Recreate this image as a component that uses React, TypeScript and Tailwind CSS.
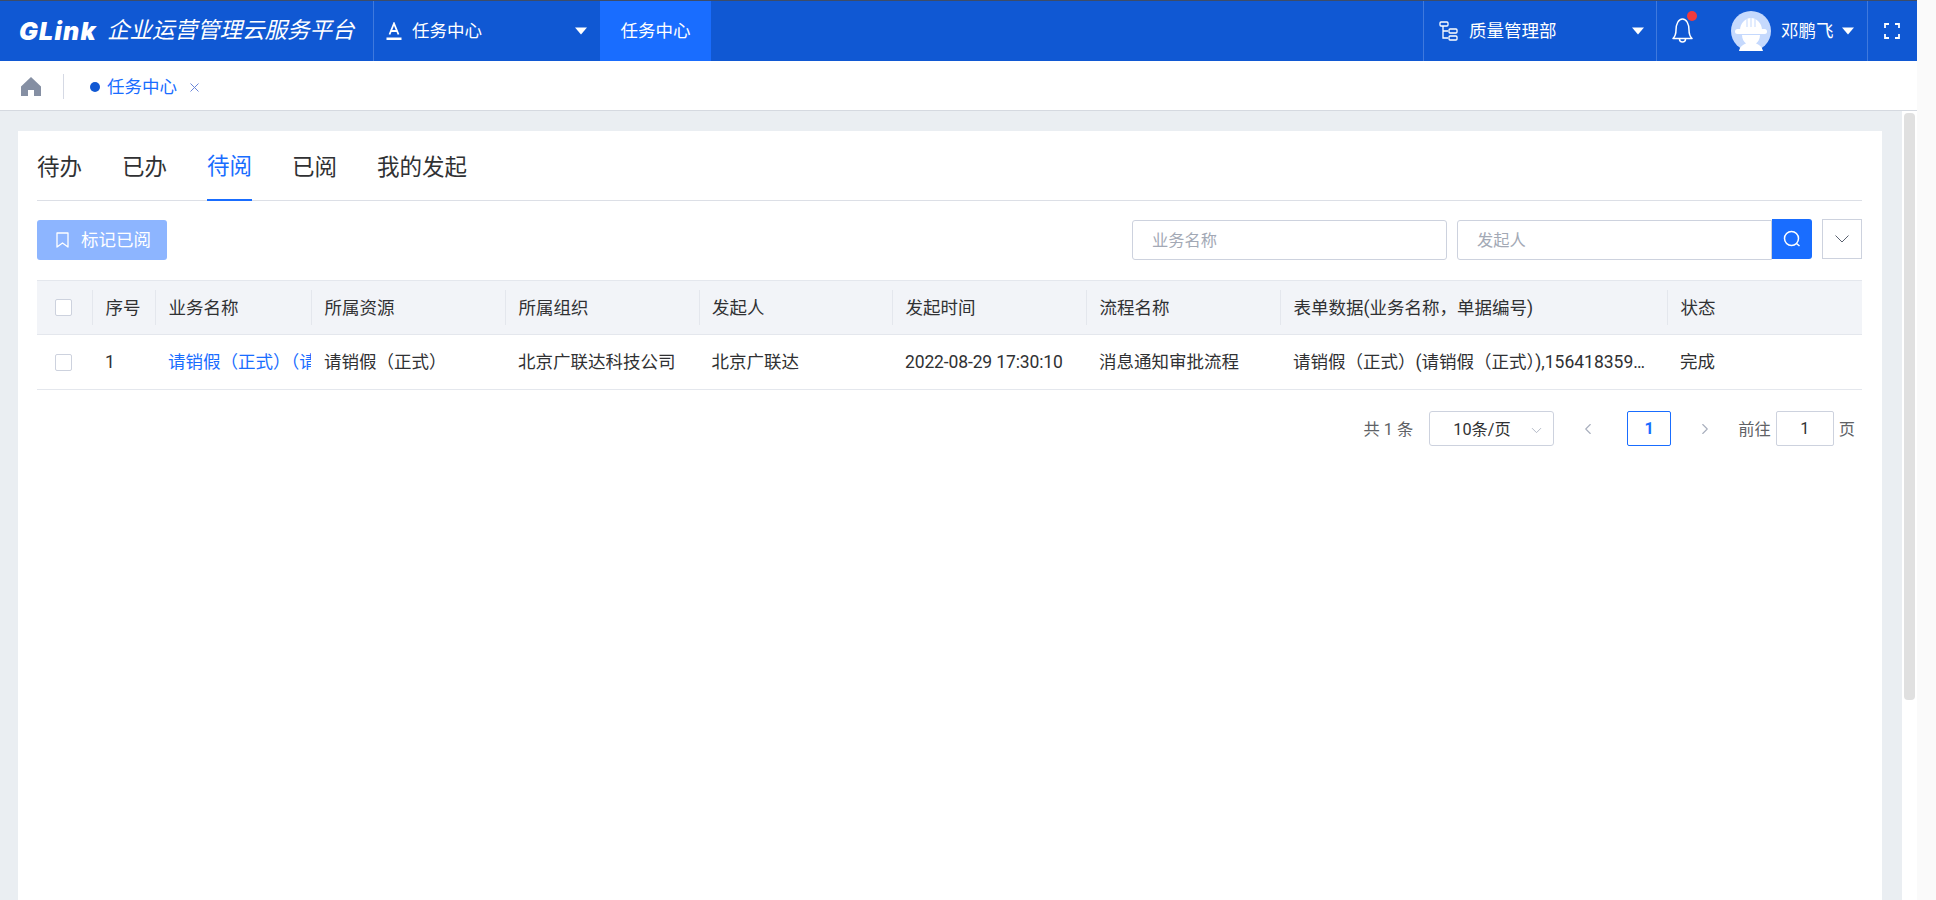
import { ChevronDown, ChevronLeft, ChevronRight } from 'lucide-react';

const columns = ['序号', '业务名称', '所属资源', '所属组织', '发起人', '发起时间', '流程名称', '表单数据(业务名称，单据编号)', '状态'];
const tabs = ['待办', '已办', '待阅', '已阅', '我的发起'];

function Caret({ className = '' }: { className?: string }) {
  return (
    <svg width="12" height="8" viewBox="0 0 12 8" className={className}>
      <path d="M0 0.5h12L6 7.5z" fill="#fff" />
    </svg>
  );
}

function Avatar() {
  return (
    <svg width="40" height="40" viewBox="0 0 40 40" className="shrink-0">
      <circle cx="20" cy="20" r="20" fill="#c5d9fd" />
      <path d="M9 19c0-6 5-12 11-12s11 6 11 12z" fill="#fff" />
      <path d="M16 8v8M20 7v9M24 8v8" stroke="#c5d9fd" strokeWidth="1" />
      <rect x="4" y="18" width="32" height="5" rx="2.5" fill="#fff" />
      <path d="M11 24h18c0 4-2 7-4 8.500 3 1 6 3 7 7.500H8c1-4.500 4-6.500 7-7.500-2-1.500-4-4.500-4-8.500z" fill="#fff" />
    </svg>
  );
}

function TopBar() {
  return (
    <div className="h-[61px] border-t border-[#3d4c68] bg-[#1058d3] flex text-white text-[17.5px] shrink-0">
      <div className="w-[374px] flex items-center pl-[19px] border-r border-[#3f79dd]">
        <span className="font-['Inter',sans-serif] font-black italic text-[25px] tracking-[1.2px] leading-none w-[88px]">GLink</span>
        <span className="italic text-[22.5px] whitespace-nowrap">企业运营管理云服务平台</span>
      </div>
      <div className="w-[226px] flex items-center pl-[12px]">
        <svg width="16" height="19" viewBox="0 0 16 19" className="shrink-0">
          <path d="M3.500 12.500L8 1.500l4.500 11M5 9h6" fill="none" stroke="#fff" strokeWidth="1.800" />
          <rect x="0.500" y="15.500" width="15" height="2.500" fill="#fff" />
        </svg>
        <span className="ml-[10px]">任务中心</span>
        <Caret className="ml-auto mr-[13px]" />
      </div>
      <div className="w-[111px] bg-[#196dff] flex items-center justify-center">任务中心</div>
      <div className="ml-auto w-[233px] flex items-center border-l border-[#3f79dd] pl-[15px]">
        <svg width="19" height="20" viewBox="0 0 19 20" className="shrink-0" fill="none" stroke="#fff" strokeWidth="1.300">
          <rect x="1" y="1" width="8" height="4" rx="1" />
          <path d="M4 5v12h5M4 10h5" />
          <rect x="10" y="8" width="8" height="4" rx="1" />
          <rect x="10" y="15" width="8" height="4" rx="1" />
        </svg>
        <span className="ml-[11px]">质量管理部</span>
        <Caret className="ml-auto mr-[12px]" />
      </div>
      <div className="w-[211px] flex items-center border-l border-[#3f79dd]">
        <div className="relative ml-[15px] w-[21px] h-[26px]">
          <svg width="21" height="26" viewBox="0 0 21 26" fill="none" stroke="#fff" strokeWidth="1.500">
            <path d="M1 20.500c2-2 3-4 3-8.500 0-6 2.500-11 6.500-11s6.500 5 6.500 11c0 4.500 1 6.500 3 8.500z" strokeLinejoin="round" />
            <path d="M7.500 21c0 4 6 4 6 0" />
          </svg>
          <span className="absolute -top-[7px] -right-[4px] w-[10px] h-[10px] rounded-full bg-[#f23b3b]" />
        </div>
        <div className="ml-[38px]">
          <Avatar />
        </div>
        <span className="ml-[10px] whitespace-nowrap">邓鹏飞</span>
        <Caret className="ml-[8px]" />
      </div>
      <div className="w-[50px] flex items-center justify-center border-l border-[#3f79dd] pr-[2px]">
        <svg width="16" height="16" viewBox="0 0 16 16" fill="none" stroke="#fff" strokeWidth="1.800">
          <path d="M1 5V1h4M11 1h4v4M15 11v4h-4M5 15H1v-4" />
        </svg>
      </div>
    </div>
  );
}

function TagBar() {
  return (
    <div className="h-[50px] bg-white border-b border-[#d5d9e0] flex items-center shrink-0">
      <svg width="20" height="19" viewBox="0 0 20 19" className="ml-[21px] shrink-0 mt-[1px]">
        <path d="M10 0L0 9.500V19h7v-6h6v6h7V9.500z" fill="#858fa3" />
      </svg>
      <div className="ml-[22px] h-[25px] border-l border-[#d5d9e4] mt-[1px]" />
      <span className="ml-[26px] w-[10px] h-[10px] rounded-full bg-[#1058d3] mt-[2px]" />
      <span className="ml-[7px] text-[17.5px] text-[#196dff] mt-[4px]">任务中心</span>
      <svg width="9" height="9" viewBox="0 0 9 9" className="ml-[13px] mt-[3px]" fill="none" stroke="#6b86d8" strokeWidth="1">
        <path d="M0.500 0.500l8 8M8.500 0.500l-8 8" />
      </svg>
    </div>
  );
}

function Checkbox() {
  return <div className="w-[17px] h-[17px] rounded-[2px] border border-[#cdd2de] bg-white" />;
}

function TaskTable() {
  const grid = 'grid grid-cols-[55px_63px_156px_194px_193.5px_193.5px_194px_194px_387px_194.5px]';
  return (
    <div className="mt-[20px] text-[17.5px] text-[#303133]">
      <div className={`${grid} h-[55px] bg-[#f2f4f8] border-y border-[#e4e7ed]`}>
        <div className="flex items-center pl-[18px]">
          <Checkbox />
        </div>
        {columns.map((col) => (
          <div key={col} className="flex items-center">
            <div className="h-[35px] w-full border-l border-[#e4e7ed] pl-[12.500px] pt-[2px] flex items-center whitespace-nowrap">{col}</div>
          </div>
        ))}
      </div>
      <div className={`${grid} h-[55px] border-b border-[#e4e7ed] items-center`}>
        <div className="pl-[18px]">
          <Checkbox />
        </div>
        <div className="pl-[13px]">1</div>
        <div className="pl-[13px] pr-[4px] overflow-hidden whitespace-nowrap text-[#196dff]">请销假（正式）（请销假（正式））</div>
        <div className="pl-[13px]">请销假（正式）</div>
        <div className="pl-[13px]">北京广联达科技公司</div>
        <div className="pl-[13px]">北京广联达</div>
        <div className="pl-[13px] tracking-[-0.13px]">2022-08-29 17:30:10</div>
        <div className="pl-[13px]">消息通知审批流程</div>
        <div className="pl-[13px] pr-[15px] truncate">请销假（正式）(请销假（正式）),1564183591234567</div>
        <div className="pl-[13px]">完成</div>
      </div>
    </div>
  );
}

function Pager() {
  return (
    <div className="mt-[21px] h-[35px] flex items-center justify-end pr-[7px] text-[16.25px] text-[#606266]">
      <span className="mt-[3px]">共 1 条</span>
      <div className="ml-[16px] w-[125px] h-[35px] rounded-[3px] border border-[#cdd2de] flex items-center pl-[23px] text-[#303133]">
        <span className="mt-[3px]">10条/页</span>
        <ChevronDown size={17} strokeWidth={1.2} color="#a8afbd" className="ml-auto mr-[8px] mt-[3px]" />
      </div>
      <ChevronLeft size={18} strokeWidth={1.5} color="#a8afbd" className="ml-[25px]" />
      <div className="ml-[30px] w-[44px] h-[35px] rounded-[2px] border border-[#196dff] text-[#196dff] font-bold flex items-center justify-center pt-[2px]">1</div>
      <ChevronRight size={18} strokeWidth={1.5} color="#a8afbd" className="ml-[25px]" />
      <span className="ml-[24px] mt-[3px]">前往</span>
      <div className="ml-[5px] w-[58px] h-[35px] rounded-[2px] border border-[#cdd2de] text-[#303133] flex items-center justify-center pt-[2px]">1</div>
      <span className="ml-[5px] mt-[3px]">页</span>
    </div>
  );
}

export default function App() {
  return (
    <div className="w-[1936px] h-[900px] flex overflow-hidden bg-[#fafafa] font-['Roboto','Noto_Sans_CJK_SC',sans-serif]">
      <div className="w-[1917px] flex flex-col">
        <TopBar />
        <TagBar />
        <div className="flex-1 flex min-h-0">
          <div className="flex-1 bg-[#eaeef2] pl-[18px] pr-[20px] pt-[20px]">
            <div className="h-full bg-white pl-[19px] pr-[20px]">
              {/* Tabs */}
              <div className="h-[70px] flex gap-[40px] border-b border-[#dcdfe6] text-[22.500px] text-[#303133]">
                {tabs.map((tab) =>
                  tab === '待阅' ? (
                    <div key={tab} className="h-[70px] pt-[4px] flex items-center border-b-[2px] border-[#196dff] text-[#196dff]">{tab}</div>
                  ) : (
                    <div key={tab} className="h-[70px] pt-[4px] flex items-center">{tab}</div>
                  )
                )}
              </div>

              {/* Toolbar */}
              <div className="mt-[19px] h-[40px] flex items-center">
                <div className="w-[130px] h-[40px] rounded-[3px] bg-[#8db5ff] text-white text-[17.5px] flex items-center pl-[19px]">
                  <svg width="13" height="16" viewBox="0 0 13 16" fill="none" stroke="#fff" strokeWidth="1.300">
                    <path d="M1 1h11v14l-5.500-4L1 15z" strokeLinejoin="round" />
                  </svg>
                  <span className="ml-[12px]">标记已阅</span>
                </div>
                <div className="ml-auto w-[315px] h-[40px] rounded-[3px] border border-[#cdd2de] flex items-center pl-[19px] pt-[2px] text-[16.25px] text-[#a3a9b5]">业务名称</div>
                <div className="ml-[10px] w-[315px] h-[40px] rounded-l-[3px] border border-[#cdd2de] flex items-center pl-[19px] pt-[2px] text-[16.25px] text-[#a3a9b5]">发起人</div>
                <div className="w-[40px] h-[40px] -mt-[2px] rounded-r-[3px] bg-[#196dff] flex items-center justify-center">
                  <svg width="18" height="18" viewBox="0 0 18 18" fill="none" stroke="#fff" strokeWidth="1.500">
                    <circle cx="8.500" cy="8.500" r="7" />
                    <path d="M13.500 13.500l3 2.500" />
                  </svg>
                </div>
                <div className="ml-[10px] w-[40px] h-[40px] -mt-[2px] border border-[#cdd2de] flex items-center justify-center">
                  <svg width="14" height="8" viewBox="0 0 14 8" fill="none" stroke="#5a6270" strokeWidth="1">
                    <path d="M0.500 0.500L7 7l6.500-6.500" />
                  </svg>
                </div>
              </div>

              <TaskTable />
              <Pager />
            </div>
          </div>
          {/* inner scrollbar */}
          <div className="w-[15px] bg-white pl-[2px] pt-[2px]">
            <div className="w-[11px] h-[587px] rounded-[4px] bg-[#e0e0e0]" />
          </div>
        </div>
      </div>
    </div>
  );
}
